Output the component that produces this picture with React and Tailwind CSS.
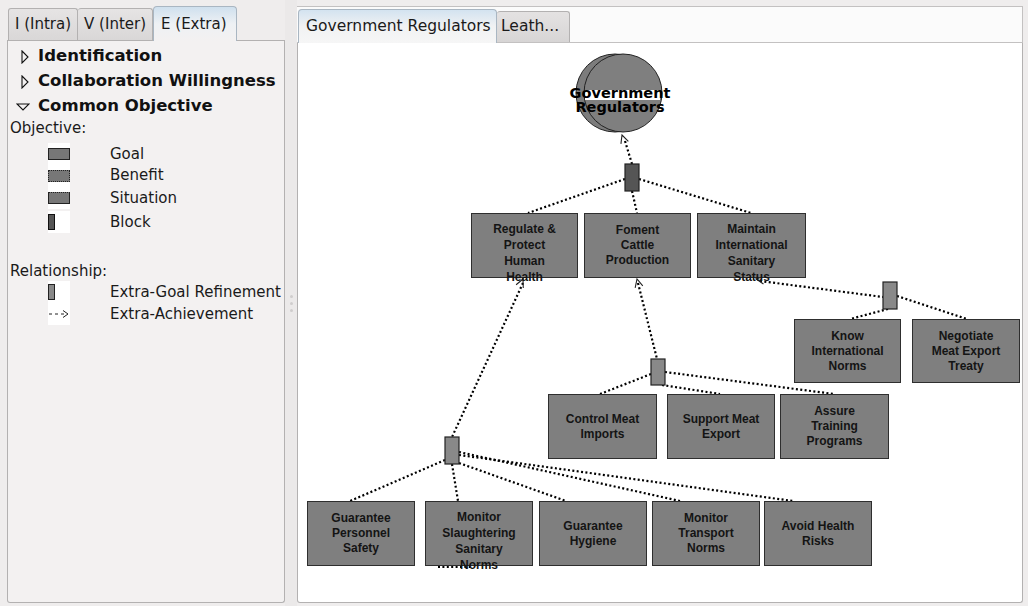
import React from "react";

// page coords of the canvas content box (inside border)
const OX = 298;
const OY = 43;

const nodes = [
  { x: 471, y: 213, w: 107, h: 65, t: ["Regulate &", "Protect", "Human", "Health"], top: true },
  { x: 584, y: 213, w: 107, h: 65, t: ["Foment", "Cattle", "Production"] },
  { x: 697, y: 213, w: 109, h: 65, t: ["Maintain", "International", "Sanitary", "Status"], top: true },
  { x: 794, y: 319, w: 107, h: 64, t: ["Know", "International", "Norms"] },
  { x: 912, y: 319, w: 108, h: 64, t: ["Negotiate", "Meat Export", "Treaty"] },
  { x: 548, y: 394, w: 109, h: 65, t: ["Control Meat", "Imports"] },
  { x: 667, y: 394, w: 108, h: 65, t: ["Support Meat", "Export"] },
  { x: 780, y: 394, w: 109, h: 65, t: ["Assure", "Training", "Programs"] },
  { x: 307, y: 501, w: 108, h: 65, t: ["Guarantee", "Personnel", "Safety"] },
  { x: 425, y: 501, w: 108, h: 65, t: ["Monitor", "Slaughtering", "Sanitary", "Norms"], top: true },
  { x: 539, y: 501, w: 108, h: 65, t: ["Guarantee", "Hygiene"] },
  { x: 652, y: 501, w: 108, h: 65, t: ["Monitor", "Transport", "Norms"] },
  { x: 764, y: 501, w: 108, h: 65, t: ["Avoid Health", "Risks"] },
];

const blocks = [
  { x: 625, y: 164, w: 14, h: 27, fill: "#555555" },
  { x: 883, y: 282, w: 14, h: 27, fill: "#898989" },
  { x: 651, y: 359, w: 14, h: 26, fill: "#898989" },
  { x: 445, y: 437, w: 14, h: 27, fill: "#898989" },
];

const dotted = [
  [632, 164, 625, 141],
  [625, 179, 528, 213],
  [632, 191, 637, 213],
  [639, 179, 751, 213],
  [523, 283, 452, 437],
  [638, 283, 657, 359],
  [760, 281, 883, 297],
  [888, 309, 850, 319],
  [897, 296, 967, 319],
  [651, 374, 600, 394],
  [662, 385, 720, 394],
  [665, 372, 834, 394],
  [445, 460, 350, 501],
  [452, 464, 458, 501],
  [459, 463, 566, 501],
  [459, 452, 680, 501],
  [459, 455, 793, 501],
  [438, 567, 470, 567],
];

// open arrow heads: tip, and the point the line comes from
const arrows = [
  [622, 135, 632, 164],
  [523, 279, 452, 437],
  [637, 279, 657, 359],
  [756, 279, 883, 297],
];

function arrowHead([tx, ty, fx, fy]) {
  const a = Math.atan2(fy - ty, fx - tx);
  const len = 9;
  const p1 = [tx + len * Math.cos(a + 0.45), ty + len * Math.sin(a + 0.45)];
  const p2 = [tx + len * Math.cos(a - 0.45), ty + len * Math.sin(a - 0.45)];
  return `${p1[0]},${p1[1]} ${tx},${ty} ${p2[0]},${p2[1]}`;
}

const TreeRow = ({ open, label }) => (
  <div className="h-[25px] flex items-center">
    <div className="w-[28px] pl-[6px] flex items-center">
      {open ? (
        <svg width="14" height="8" viewBox="0 0 14 8">
          <polygon points="1,1 13,1 7,7" fill="none" stroke="#111" strokeWidth="1.1" />
        </svg>
      ) : (
        <svg width="14" height="14" viewBox="0 0 14 14">
          <polygon points="6,1 12,7 6,13" fill="none" stroke="#111" strokeWidth="1.1" />
        </svg>
      )}
    </div>
    <span className="font-bold text-[16.5px] text-[#111]">{label}</span>
  </div>
);

const LegendRow = ({ h, icon, label }) => (
  <div className={`flex items-center ${h}`}>
    <div className="ml-[38px] w-[22px] h-[22px] bg-white flex items-center">{icon}</div>
    <span className="ml-[40px]">{label}</span>
  </div>
);

export default function App() {
  return (
    <div className="w-[1028px] h-[606px] bg-[#efeded] flex overflow-hidden font-['DejaVu_Sans',sans-serif] text-[15px] text-[#1a1a1a]">
      {/* Left side panel */}
      <div className="w-[285px] flex flex-col pl-[7px] pt-[7px] pb-[3px]">
        <div className="h-[34px] flex items-end border-b border-[#b3b1b1] pl-px">
          <div className="h-[32px] px-[6px] flex items-center bg-gradient-to-b from-[#e6e4e4] to-[#d9d7d7] border border-b-0 border-[#b3b1b1] rounded-t-[3px]">
            I (Intra)
          </div>
          <div className="h-[32px] px-[6px] flex items-center bg-gradient-to-b from-[#e6e4e4] to-[#d9d7d7] border border-b-0 border-l-0 border-[#b3b1b1] rounded-t-[3px]">
            V (Inter)
          </div>
          <div className="relative -mb-px h-[35px] w-[84px] pl-[7px] flex items-center bg-gradient-to-b from-[#cfe0ee] via-[#eef1f4] to-[#f3f1f1] border border-b-0 border-[#a9b6c2] rounded-t-[4px]">
            E (Extra)
          </div>
        </div>
        <div className="flex-1 bg-[#f3f1f1] border border-t-0 border-[#b3b1b1] rounded-b-[3px] pt-[3px] pl-[2px]">
          <TreeRow label="Identification" />
          <TreeRow label="Collaboration Willingness" />
          <TreeRow open label="Common Objective" />
          <div className="h-[18px] flex items-center">Objective:</div>
          <div className="mt-[6px]">
            <LegendRow
              h="h-[22px]"
              label="Goal"
              icon={<div className="w-[22px] h-[12px] bg-[#777] border border-[#222]" />}
            />
            <LegendRow
              h="h-[21px]"
              label="Benefit"
              icon={<div className="w-[22px] h-[12px] bg-[#777] border border-dotted border-[#222]" />}
            />
            <LegendRow
              h="h-[24px]"
              label="Situation"
              icon={<div className="w-[22px] h-[12px] bg-[#777] border border-[#222] [border-top-style:dotted]" />}
            />
            <LegendRow
              h="h-[24px]"
              label="Block"
              icon={<div className="w-[7px] h-[16px] bg-[#555] border border-[#111]" />}
            />
          </div>
          <div className="mt-[27px] h-[20px] flex items-center">Relationship:</div>
          <LegendRow
            h="h-[22px]"
            label="Extra-Goal Refinement"
            icon={<div className="w-[7px] h-[16px] bg-[#888] border border-[#222]" />}
          />
          <LegendRow
            h="h-[22px]"
            label="Extra-Achievement"
            icon={
              <svg width="22" height="10" viewBox="0 0 22 10">
                <line x1="1" y1="5" x2="19" y2="5" stroke="#222" strokeWidth="1" strokeDasharray="3 3" />
                <polyline points="15,1.5 20,5 15,8.5" fill="none" stroke="#222" strokeWidth="1" />
              </svg>
            }
          />
        </div>
      </div>

      {/* Splitter */}
      <div className="w-[12px] bg-[#ebe9e9] flex flex-col items-center justify-center gap-[4px]">
        <div className="w-[3px] h-[3px] rounded-full bg-[#cfcdcd]" />
        <div className="w-[3px] h-[3px] rounded-full bg-[#cfcdcd]" />
        <div className="w-[3px] h-[3px] rounded-full bg-[#cfcdcd]" />
      </div>

      {/* Right side: diagram tabs */}
      <div className="w-[726px] flex flex-col pt-[6px] pb-[3px]">
        <div className="h-[37px] flex items-end bg-[#fbfbfb] border-t border-r border-b border-[#c3c1c1] pl-px">
          <div className="relative -mb-px h-[34px] w-[199px] flex items-center pl-[7px] bg-gradient-to-b from-[#d3e3f0] via-[#f1f2f3] to-[#f6f6f6] border border-b-0 border-[#a9b6c2] rounded-t-[4px] text-[15.5px]">
            Government Regulators
          </div>
          <div className="h-[31px] w-[73px] flex items-center pl-[4px] bg-gradient-to-b from-[#e4e2e2] to-[#d7d5d5] border border-b-0 border-l-0 border-[#b3b1b1] rounded-t-[3px] text-[15.5px]">
            Leath...
          </div>
        </div>
        <div className="relative flex-1 bg-white border border-t-0 border-[#b3b1b1] rounded-b-[3px] overflow-hidden">
          <svg
            className="absolute left-0 top-0"
            width="723"
            height="559"
            viewBox={`${OX} ${OY} 723 559`}
          >
            <circle cx="615" cy="93" r="39" fill="#7c7c7c" stroke="#222" strokeWidth="1" />
            <circle cx="623" cy="93" r="39" fill="#7f7f7f" stroke="#222" strokeWidth="1" />
            <rect x="585" y="90" width="75" height="10" fill="#fff" />
            {dotted.map(([x1, y1, x2, y2], i) => (
              <line
                key={i}
                x1={x1}
                y1={y1}
                x2={x2}
                y2={y2}
                stroke="#000"
                strokeWidth="2.2"
                strokeDasharray="2 2.4"
              />
            ))}
            {arrows.map((a, i) => (
              <polyline key={i} points={arrowHead(a)} fill="none" stroke="#222" strokeWidth="1.1" />
            ))}
            {blocks.map((b, i) => (
              <rect key={i} x={b.x} y={b.y} width={b.w} height={b.h} fill={b.fill} stroke="#222" strokeWidth="1.2" />
            ))}
          </svg>

          {/* actor label */}
          <div
            className="absolute w-[120px] text-center font-bold text-[14.5px] leading-[14px] text-black"
            style={{ left: 560 - OX, top: 86 - OY }}
          >
            <div>Government</div>
            <div>Regulators</div>
          </div>

          {nodes.map((n, i) => (
            <div
              key={i}
              className={`absolute flex flex-col items-center bg-[#7f7f7f] border-[1.5px] border-[#2e2e2e] font-['Liberation_Sans',Arial,sans-serif] font-bold text-[12px] text-[#141414] ${
                n.top ? "justify-start pt-[7px] leading-[16px]" : "justify-center leading-[15px]"
              }`}
              style={{ left: n.x - OX, top: n.y - OY, width: n.w, height: n.h }}
            >
              {n.t.map((line, j) => (
                <div key={j} className="whitespace-nowrap">
                  {line}
                </div>
              ))}
            </div>
          ))}
        </div>
      </div>
    </div>
  );
}
